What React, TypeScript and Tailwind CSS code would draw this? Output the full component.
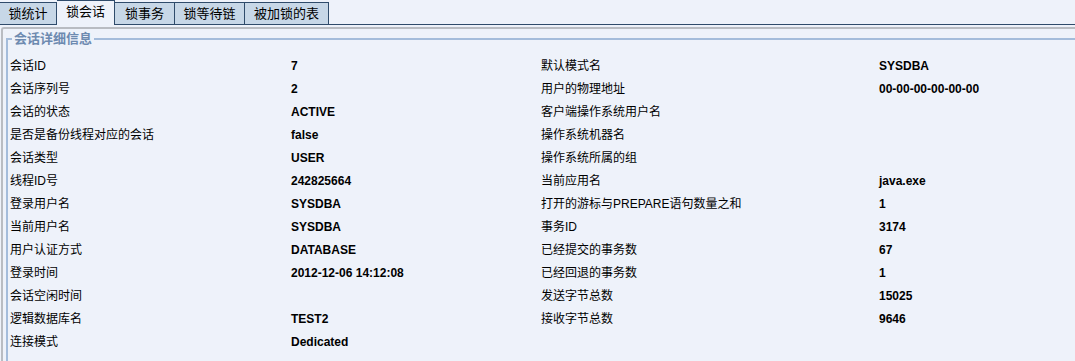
import type { FC } from "react";

const tabs = [
  { label: "锁统计", w: "w-[57px]" },
  { label: "锁会话", w: "w-[58px]", active: true },
  { label: "锁事务", w: "w-[60px]" },
  { label: "锁等待链", w: "w-[70px]" },
  { label: "被加锁的表", w: "w-[84px]" },
];

// label, value, label, value
const rows: [string, string, string, string][] = [
  ["会话ID", "7", "默认模式名", "SYSDBA"],
  ["会话序列号", "2", "用户的物理地址", "00-00-00-00-00-00"],
  ["会话的状态", "ACTIVE", "客户端操作系统用户名", ""],
  ["是否是备份线程对应的会话", "false", "操作系统机器名", ""],
  ["会话类型", "USER", "操作系统所属的组", ""],
  ["线程ID号", "242825664", "当前应用名", "java.exe"],
  ["登录用户名", "SYSDBA", "打开的游标与PREPARE语句数量之和", "1"],
  ["当前用户名", "SYSDBA", "事务ID", "3174"],
  ["用户认证方式", "DATABASE", "已经提交的事务数", "67"],
  ["登录时间", "2012-12-06 14:12:08", "已经回退的事务数", "1"],
  ["会话空闲时间", "", "发送字节总数", "15025"],
  ["逻辑数据库名", "TEST2", "接收字节总数", "9646"],
  ["连接模式", "Dedicated", "", ""],
];

const App: FC = () => {
  return (
    <div className="w-[1075px] h-[361px] overflow-hidden bg-[#eef2fa] font-['Liberation_Sans','Noto_Sans_CJK_SC',sans-serif] text-[12px] text-black">
      {/* tab strip */}
      <div className="flex h-[25px] items-end">
        {tabs.map((t) =>
          t.active ? (
            <div
              key={t.label}
              className={`${t.w} h-[25px] flex items-center justify-center border-t border-r border-[#2f4b6b] bg-[#eef2fa] text-[13px] pb-[2px]`}
            >
              {t.label}
            </div>
          ) : (
            <div
              key={t.label}
              className={`${t.w} h-[23px] flex items-center justify-center border-t border-r border-b border-[#2f4b6b] bg-[#c7d7e7] text-[13px]`}
            >
              {t.label}
            </div>
          )
        )}
        <div className="flex-1 border-b border-[#2f4b6b]" />
      </div>

      {/* panel */}
      <div className="ml-[1px] mt-[2px] w-[1100px] h-[340px] border-l-2 border-t-2 border-[#b9bcc2] rounded-tl-[3px] pl-[3px]">
        <fieldset className="mt-[2px] w-[1090px] border-2 border-[#a4bcdb] pb-[30px]">
          <legend className="ml-[4px] px-[2px] leading-[16px] text-[13px] font-bold text-[#6d8ab0]">
            会话详细信息
          </legend>
          <div className="pt-[7px] pl-[2px] grid grid-cols-[281px_250px_338px_1fr]">
            {rows.map((r, i) => (
              <div key={i} className="contents">
                <div className="h-[23px] flex items-center">{r[0]}</div>
                <div className="h-[23px] flex items-center font-bold">{r[1]}</div>
                <div className="h-[23px] flex items-center">{r[2]}</div>
                <div className="h-[23px] flex items-center font-bold">{r[3]}</div>
              </div>
            ))}
          </div>
        </fieldset>
      </div>
    </div>
  );
};

export default App;
